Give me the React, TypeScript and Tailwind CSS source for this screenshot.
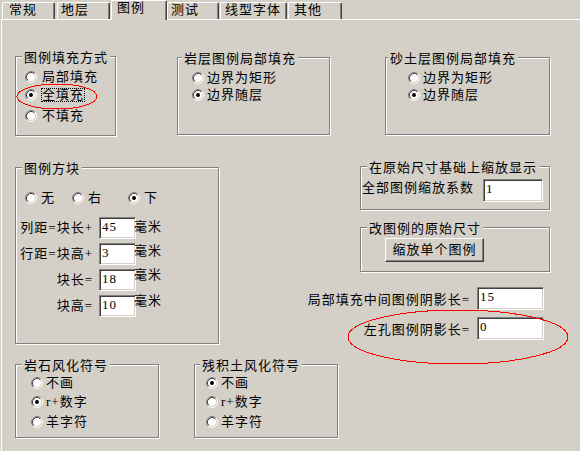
import type { ReactNode } from 'react'

function RadioDot({ checked }: { checked?: boolean }) {
  return (
    <svg width="12" height="12" viewBox="0 0 12 12" className="shrink-0">
      <circle cx="6" cy="6" r="4.5" fill="#fff" />
      <path d="M2.11 9.89A5.5 5.5 0 0 1 9.89 2.11" stroke="#808080" fill="none" />
      <path d="M9.89 2.11A5.5 5.5 0 0 1 2.11 9.89" stroke="#fff" fill="none" />
      <path d="M2.82 9.18A4.5 4.5 0 0 1 9.18 2.82" stroke="#404040" fill="none" />
      <path d="M9.18 2.82A4.5 4.5 0 0 1 2.82 9.18" stroke="#d4d0c8" fill="none" />
      {checked && <circle cx="6" cy="6" r="2" fill="#000" />}
    </svg>
  )
}

function Radio({
  label,
  checked,
  focus,
  className = '',
}: {
  label: string
  checked?: boolean
  focus?: boolean
  className?: string
}) {
  return (
    <div className={`flex h-[14px] items-center ${className}`}>
      <RadioDot checked={checked} />
      <span
        className={`whitespace-nowrap border leading-[12px] ${
          focus ? 'border-dotted border-black' : 'border-transparent'
        }`}
      >
        {label}
      </span>
    </div>
  )
}

function Group({
  title,
  titleLeft,
  className,
  children,
}: {
  title: string
  titleLeft: string
  className: string
  children?: ReactNode
}) {
  return (
    <div
      className={`relative shrink-0 border border-[#808080] shadow-[inset_1px_1px_0_#fff,1px_1px_0_#fff] ${className}`}
    >
      <span
        className={`absolute top-[-6px] ${titleLeft} whitespace-nowrap bg-[#d4d0c8] px-[2px] leading-[14px]`}
      >
        {title}
      </span>
      {children}
    </div>
  )
}

function Field({ value, className }: { value: string; className: string }) {
  return (
    <div
      className={`shrink-0 border border-b-white border-l-[#808080] border-r-white border-t-[#808080] bg-white pl-[2px] pt-[2px] leading-[14px] shadow-[inset_1px_1px_0_#404040,inset_-1px_-1px_0_#d4d0c8] ${className}`}
    >
      {value}
    </div>
  )
}

function Tab({ label, className, active }: { label: string; className: string; active?: boolean }) {
  return (
    <div
      className={`shrink-0 rounded-t-[2px] border-l border-r border-t border-l-white border-r-[#404040] border-t-white bg-[#d4d0c8] leading-[14px] shadow-[inset_-1px_0_0_#808080] ${
        active ? 'relative z-10 -mb-[1px] h-[20px]' : 'h-[17px]'
      } ${className}`}
    >
      {label}
    </div>
  )
}

const blockRows = [
  { label: '列距=块长+', value: '45', mm: 'mt-[3px]' },
  { label: '行距=块高+', value: '3', mm: 'mt-[1px]' },
  { label: '块长=', value: '18', mm: '-mt-[1px]' },
  { label: '块高=', value: '10', mm: '-mt-[1px]' },
]

export default function App() {
  return (
    <div className="relative h-[451px] w-[580px] overflow-hidden bg-[#d4d0c8] font-['Liberation_Serif','Noto_Sans_CJK_SC',serif] text-[13px] leading-[14px] tracking-[1px] text-black">
      {/* Tabs */}
      <div className="flex h-[19px] items-end">
        <Tab label="常规" className="ml-[2px] w-[53px] pl-[6px]" />
        <Tab label="地层" className="ml-[2px] w-[53px] pl-[3px]" />
        <Tab label="图例" className="ml-[1px] w-[56px] pl-[5px]" active />
        <Tab label="测试" className="w-[52px] pl-[3px]" />
        <Tab label="线型字体" className="ml-[1px] w-[67px] pl-[4px]" />
        <Tab label="其他" className="ml-[1px] w-[54px] pl-[5px]" />
      </div>

      {/* Tab page */}
      <div className="ml-[1px] h-[432px] border-l border-t border-white">
        {/* Row 1 */}
        <div className="mt-[36px] flex items-start">
          <Group title="图例填充方式" titleLeft="left-[6px]" className="ml-[13px] h-[80px] w-[101px] pl-[9px] pt-[13px]">
            <Radio label="局部填充" className="gap-[4px]" />
            <Radio label="全填充" checked focus className="mt-[4px] gap-[4px]" />
            <Radio label="不填充" className="mt-[7px] gap-[4px]" />
          </Group>
          <Group title="岩层图例局部填充" titleLeft="left-[4px]" className="ml-[61px] mt-[1px] h-[78px] w-[153px] pl-[14px] pt-[13px]">
            <Radio label="边界为矩形" className="gap-[2px]" />
            <Radio label="边界随层" checked className="mt-[3px] gap-[2px]" />
          </Group>
          <Group title="砂土层图例局部填充" titleLeft="left-[2px]" className="ml-[55px] mt-[1px] h-[78px] w-[165px] pl-[22px] pt-[13px]">
            <Radio label="边界为矩形" className="gap-[2px]" />
            <Radio label="边界随层" checked className="mt-[3px] gap-[2px]" />
          </Group>
        </div>

        {/* Row 2 */}
        <div className="mt-[30px] flex items-start">
          <Group title="图例方块" titleLeft="left-[6px]" className="ml-[13px] mt-[1px] h-[177px] w-[204px] pt-[23px]">
            <div className="flex h-[14px] items-center pl-[9px]">
              <Radio label="无" className="w-[47px] gap-[3px]" />
              <Radio label="右" className="w-[56px] gap-[3px]" />
              <Radio label="下" checked className="gap-[3px]" />
            </div>
            <div className="mt-[12px] flex flex-col gap-[4px]">
              {blockRows.map((r) => (
                <div key={r.label} className="flex h-[22px] items-start">
                  <span className="w-[77px] self-center whitespace-nowrap text-right">{r.label}</span>
                  <Field value={r.value} className="ml-[6px] h-[22px] w-[37px]" />
                  <span className={`-ml-[2px] whitespace-nowrap ${r.mm}`}>毫米</span>
                </div>
              ))}
            </div>
          </Group>

          <div className="flex w-[331px] flex-col">
            <Group title="在原始尺寸基础上缩放显示" titleLeft="left-[6px]" className="ml-[141px] flex h-[44px] w-[190px] items-start pl-[1px]">
              <span className="mt-[14px] whitespace-nowrap">全部图例缩放系数</span>
              <Field value="1" className="ml-[9px] mt-[12px] h-[23px] w-[60px]" />
            </Group>
            <Group title="改图例的原始尺寸" titleLeft="left-[6px]" className="ml-[141px] mt-[17px] h-[45px] w-[190px]">
              <div className="ml-[24px] mt-[10px] flex h-[24px] w-[99px] items-center justify-center border border-b-[#404040] border-l-white border-r-[#404040] border-t-white shadow-[inset_-1px_-1px_0_#808080]">
                缩放单个图例
              </div>
            </Group>
            <div className="mt-[15px] flex items-start justify-end gap-[7px] pr-[6px]">
              <span className="mt-[6px] whitespace-nowrap">局部填充中间图例阴影长=</span>
              <Field value="15" className="h-[23px] w-[67px]" />
            </div>
            <div className="mt-[7px] flex items-start justify-end gap-[7px] pr-[6px]">
              <span className="mt-[6px] whitespace-nowrap">左孔图例阴影长=</span>
              <Field value="0" className="h-[23px] w-[67px]" />
            </div>
          </div>
        </div>

        {/* Row 3 */}
        <div className="mt-[20px] flex items-start">
          <Group title="岩石风化符号" titleLeft="left-[6px]" className="ml-[13px] h-[74px] w-[144px] pl-[15px] pt-[11px]">
            <Radio label="不画" className="gap-[2px]" />
            <Radio label="r+数字" checked className="mt-[5px] gap-[2px]" />
            <Radio label="羊字符" className="mt-[6px] gap-[2px]" />
          </Group>
          <Group title="残积土风化符号" titleLeft="left-[5px]" className="ml-[35px] h-[74px] w-[144px] pl-[11px] pt-[11px]">
            <Radio label="不画" checked className="gap-[2px]" />
            <Radio label="r+数字" className="mt-[5px] gap-[2px]" />
            <Radio label="羊字符" className="mt-[6px] gap-[2px]" />
          </Group>
        </div>
      </div>

      {/* Red hand-drawn annotations */}
      <svg className="pointer-events-none absolute left-0 top-0" width="580" height="451" shapeRendering="crispEdges">
        <ellipse cx="57" cy="96.5" rx="40" ry="12.5" fill="none" stroke="#ff0000" />
        <ellipse cx="458" cy="337" rx="110" ry="27" fill="none" stroke="#ff0000" />
      </svg>
    </div>
  )
}
